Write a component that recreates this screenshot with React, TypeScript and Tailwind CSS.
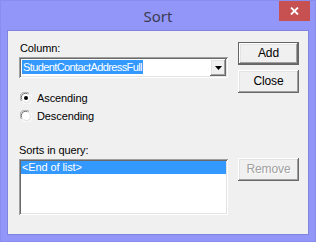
import React from 'react';

const raised =
  'shadow-[inset_-1px_-1px_0_#696969,inset_1px_1px_0_#ffffff,inset_-2px_-2px_0_#a0a0a0,inset_2px_2px_0_#e3e3e3]';
const sunken =
  'shadow-[inset_1px_1px_0_#a0a0a0,inset_-1px_-1px_0_#ffffff,inset_2px_2px_0_#696969,inset_-2px_-2px_0_#e3e3e3]';

function Radio({ checked, label }: { checked?: boolean; label: string }) {
  return (
    <div className="flex h-[18px] items-center">
      <svg width="12" height="12" viewBox="0 0 12 12" className="ml-[1px] mr-[5px]">
        <path d="M1.5 9 A5 5 0 0 1 9 1.5" fill="none" stroke="#a0a0a0" />
        <path d="M2.5 8.2 A4 4 0 0 1 8.2 2.5" fill="none" stroke="#696969" />
        <circle cx="6" cy="6" r="4" fill="#ffffff" />
        <path d="M3 10.5 A5 5 0 0 0 10.5 3" fill="none" stroke="#ffffff" />
        <path d="M3.8 9.5 A4 4 0 0 0 9.5 3.8" fill="none" stroke="#e3e3e3" />
        {checked && <circle cx="6" cy="6" r="2" fill="#000000" />}
      </svg>
      <span>{label}</span>
    </div>
  );
}

function Button({ label, def, disabled }: { label: string; def?: boolean; disabled?: boolean }) {
  return (
    <div className={`h-[23px] w-[61px] ${def ? 'border border-[#646464]' : ''}`}>
      <div
        className={`flex h-full w-full items-center justify-center bg-[#f0f0f0] text-[12px] ${raised} ${
          disabled ? 'text-[#a0a0a0] [text-shadow:1px_1px_0_#ffffff]' : 'text-black'
        }`}
      >
        {label}
      </div>
    </div>
  );
}

export default function App() {
  return (
    <div className="flex h-[242px] w-[316px] flex-col border border-[#8a8df0] bg-[#9396f9] font-['Liberation_Sans',Arial,sans-serif] text-[11px] leading-[13px] tracking-[-0.1px] text-black">
      {/* title bar */}
      <div className="relative flex h-[29px] items-center justify-center">
        <span className="mt-[1px] font-['Noto_Sans',sans-serif] text-[15px] leading-[20px] tracking-normal text-[#3b3b52]">Sort</span>
        <div className="absolute right-[5px] top-0 flex h-[20px] w-[31px] items-center justify-center bg-[#c75050]">
          <svg width="9" height="8" viewBox="0 0 9 8">
            <path d="M1 0.5 L8 7.5 M8 0.5 L1 7.5" stroke="#ffffff" strokeWidth="1.8" />
          </svg>
        </div>
      </div>

      {/* client area */}
      <div className="mx-[6px] flex h-[205px] border border-[#8084e0] bg-[#f0f0f0] pl-[11px]">
        {/* left column */}
        <div className="flex w-[209px] flex-col">
          <div className="mt-[11px] h-[13px] pl-[1px]">Column:</div>
          <div className={`mt-[2px] flex h-[21px] items-center bg-white pl-[3px] pr-[2px] ${sunken}`}>
            <span className="flex-1">
              <span className="bg-[#3399ff] px-[1px] py-[1px] tracking-[-0.6px] text-white">StudentContactAddressFull</span>
            </span>
            <div className={`flex h-[17px] w-[16px] items-center justify-center bg-[#f0f0f0] ${raised}`}>
              <svg width="7" height="4" viewBox="0 0 7 4">
                <path d="M0 0 H7 L3.5 4 Z" fill="#000000" />
              </svg>
            </div>
          </div>
          <div className="mt-[11px]">
            <Radio checked label="Ascending" />
            <Radio label="Descending" />
          </div>
          <div className="mt-[19px] h-[13px]">Sorts in query:</div>
          <div className={`mt-[2px] h-[56px] bg-white p-[2px] ${sunken}`}>
            <div className="h-[13px] bg-[#3399ff] pl-[1px] text-white">&lt;End of list&gt;</div>
          </div>
        </div>

        {/* right column */}
        <div className="ml-[10px] flex flex-col">
          <div className="mt-[11px]">
            <Button label="Add" def />
          </div>
          <div className="mt-[5px]">
            <Button label="Close" />
          </div>
          <div className="mt-[65px]">
            <Button label="Remove" disabled />
          </div>
        </div>
      </div>
    </div>
  );
}
